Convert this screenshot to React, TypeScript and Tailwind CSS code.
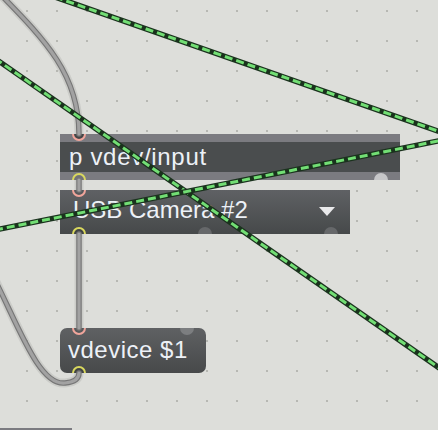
import React from "react";

function GreenCord({ x1, y1, x2, y2 }: { x1: number; y1: number; x2: number; y2: number }) {
  return (
    <g>
      <line x1={x1} y1={y1} x2={x2} y2={y2} stroke="#1a321d" strokeWidth={5.5} />
      <line x1={x1} y1={y1} x2={x2} y2={y2} stroke="#72de74" strokeWidth={3} strokeDasharray="8 4" />
    </g>
  );
}

function GrayCord({ d }: { d: string }) {
  return (
    <g fill="none" strokeLinecap="round">
      <path d={d} stroke="rgba(0,0,0,0.08)" strokeWidth={9} />
      <path d={d} stroke="#767676" strokeWidth={5.5} />
      <path d={d} stroke="#a2a2a2" strokeWidth={3.2} />
    </g>
  );
}

const font = { fontFamily: '"Liberation Sans", Arial, sans-serif' };

export default function App() {
  return (
    <div className="relative w-[438px] h-[430px] overflow-hidden bg-[#dddeda]" style={font}>
      <svg className="absolute inset-0" width={438} height={430}>
        <defs>
          <pattern id="dots" x={26} y={10} width={30} height={30} patternUnits="userSpaceOnUse">
            <rect x={0} y={0} width={2} height={2} fill="#b7b8b3" />
          </pattern>
        </defs>
        <rect width={438} height={430} fill="url(#dots)" />
      </svg>

      {/* p vdev/input */}
      <div className="absolute left-[60px] top-[134px] w-[340px] h-[46px] flex flex-col overflow-hidden">
        <div className="h-[8px] bg-[#7b7b80]" />
        <div className="h-[30px] bg-[#4a4d4e] pl-[9px] text-[24px] leading-[30px] text-[#edf1f7] tracking-[0.7px] whitespace-nowrap">
          p vdev/input
        </div>
        <div className="h-[8px] bg-[#7b7b80]" />
        <div className="absolute left-[12px] top-[-7px] w-[14px] h-[14px] rounded-full border-2 border-[#f0a59b] bg-[#4a4d4e]" />
        <div className="absolute left-[12px] top-[39px] w-[14px] h-[14px] rounded-full border-2 border-[#d9d85e] bg-[#7b7b80]" />
        <div className="absolute left-[314px] top-[39px] w-[14px] h-[14px] rounded-full bg-[#c6c6c8]" />
      </div>

      {/* umenu */}
      <div className="absolute left-[60px] top-[190px] w-[290px] h-[44px] overflow-hidden bg-gradient-to-b from-[#5f6164] to-[#46494a]">
        <div className="pt-[5px] pl-[13px] text-[24px] leading-[30px] text-[#edf1f7] whitespace-nowrap">
          USB Camera #2
        </div>
        <div className="absolute left-[259px] top-[17px] w-0 h-0 border-l-[8.5px] border-r-[8.5px] border-t-[9px] border-l-transparent border-r-transparent border-t-[#e9e9eb]" />
        <div className="absolute left-[12px] top-[-7px] w-[14px] h-[14px] rounded-full border-2 border-[#f0a59b] bg-[#5f6164]" />
        <div className="absolute left-[12px] top-[37px] w-[14px] h-[14px] rounded-full border-2 border-[#d9d85e] bg-[#46494a]" />
        <div className="absolute left-[138px] top-[37px] w-[14px] h-[14px] rounded-full bg-[#66686a]" />
        <div className="absolute left-[264px] top-[37px] w-[14px] h-[14px] rounded-full bg-[#66686a]" />
      </div>

      {/* vdevice $1 */}
      <div className="absolute left-[60px] top-[328px] w-[146px] h-[45px] rounded-[7px] overflow-hidden bg-gradient-to-b from-[#5f6163] to-[#47494a]">
        <div className="pt-[7px] pl-[8px] text-[24px] leading-[30px] text-[#edf1f7] tracking-[0.5px] whitespace-nowrap">
          vdevice $1
        </div>
        <div className="absolute left-[12px] top-[-7px] w-[14px] h-[14px] rounded-full border-2 border-[#f0a59b] bg-[#5f6163]" />
        <div className="absolute left-[12px] top-[38px] w-[14px] h-[14px] rounded-full border-2 border-[#d9d85e] bg-[#47494a]" />
        <div className="absolute left-[120px] top-[-7px] w-[14px] h-[14px] rounded-full bg-[#7c7e80]" />
      </div>

      {/* partial object at bottom */}
      <div className="absolute left-0 top-[428px] w-[72px] h-[2px] bg-[#7b7b80]" />

      <svg className="absolute inset-0 pointer-events-none" width={438} height={430}>
        <GrayCord d="M 2 -4 C 45 40, 79 75, 79 134" />
        <GrayCord d="M 79 180 L 79 190" />
        <GrayCord d="M 79 234 L 79 328" />
        <GrayCord d="M -4 282 C 20 330, 40 386, 65 383 C 75 382, 79 378, 79 373" />
        <GreenCord x1={55} y1={-3} x2={445} y2={133.5} />
        <GreenCord x1={-5} y1={58.5} x2={445} y2={372} />
        <GreenCord x1={-5} y1={230} x2={445} y2={139.6} />
      </svg>
    </div>
  );
}
